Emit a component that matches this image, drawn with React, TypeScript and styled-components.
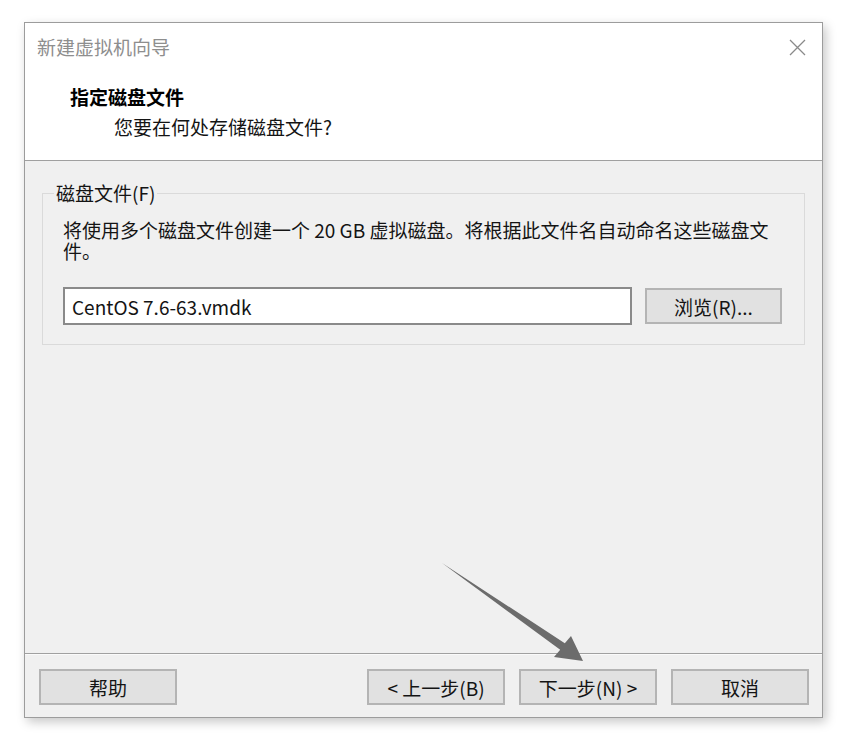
import React from 'react'
import styled, { createGlobalStyle } from 'styled-components'

const GlobalStyle = createGlobalStyle`
  html, body {
    margin: 0;
    padding: 0;
    background: #ffffff;
    font-family: "Noto Sans CJK SC", "Noto Sans", sans-serif;
    color: #141414;
  }
`

const Page = styled.div`
  position: relative;
  width: 852px;
  height: 744px;
  padding: 22px 0 0 24px;
  box-sizing: border-box;
`

const Dialog = styled.div`
  width: 799px;
  height: 696px;
  box-sizing: border-box;
  border: 1px solid #9c9c9c;
  background: #f0f0f0;
  display: flex;
  flex-direction: column;
  box-shadow: 3px 4px 10px rgba(0, 0, 0, 0.22);
`

const Header = styled.div`
  height: 138px;
  box-sizing: border-box;
  background: #ffffff;
  border-bottom: 1px solid #a0a0a0;
  padding: 13px 0 0 12px;
  display: flex;
  flex-direction: column;
`

const TitleBar = styled.div`
  display: flex;
  align-items: center;
  justify-content: space-between;
  height: 22px;
  padding-right: 16px;
`

const Title = styled.span`
  font-size: 19px;
  line-height: 22px;
  color: #8e8e8e;
`

const CloseButton = styled.span`
  display: flex;
  width: 17px;
  height: 17px;
`

const Heading = styled.div`
  margin: 28px 0 0 33px;
  font-size: 19px;
  line-height: 22px;
  font-weight: 700;
  color: #000;
`

const SubHeading = styled.div`
  margin: 8px 0 0 77px;
  font-size: 19px;
  line-height: 22px;
`

const Body = styled.div`
  flex: 1;
  padding: 21px 17px 0 17px;
`

const Group = styled.fieldset`
  margin: 0;
  padding: 0 0 19px 11px;
  border: 1px solid #dadada;
  min-width: 0;
`

const Legend = styled.legend`
  padding: 0 2px;
  font-size: 19px;
  line-height: 22px;
`

const GroupContent = styled.div`
  padding: 15px 22px 0 9px;
`

const Description = styled.p`
  margin: 0;
  font-size: 19px;
  line-height: 21px;
`

const FileRow = styled.div`
  display: flex;
  align-items: center;
  gap: 13px;
  margin-top: 26px;
`

const FileInput = styled.input`
  flex: 1;
  min-width: 0;
  height: 38px;
  box-sizing: border-box;
  border: 2px solid #8a8a8a;
  background: #ffffff;
  padding: 0 7px;
  font-family: inherit;
  font-size: 19px;
  color: #141414;
  outline: none;
`

const Button = styled.button<{ $width?: number }>`
  width: ${(p) => p.$width ?? 138}px;
  height: 36px;
  box-sizing: border-box;
  background: #e1e1e1;
  border: 2px solid #b4b4b4;
  border-radius: 0;
  padding: 0;
  font-family: inherit;
  font-size: 19px;
  line-height: 1;
  color: #141414;
`

const Footer = styled.div`
  height: 64px;
  box-sizing: border-box;
  border-top: 1px solid #a0a0a0;
  box-shadow: inset 0 1px 0 #fafafa;
  padding: 15px 13px 0 14px;
  display: flex;
  align-items: flex-start;
  gap: 14px;
`

const Spacer = styled.div`
  flex: 1;
`

const ArrowLayer = styled.svg`
  position: absolute;
  left: 0;
  top: 0;
  pointer-events: none;
`

export default function App() {
  return (
    <>
      <GlobalStyle />
      <Page>
        <Dialog>
          <Header>
            <TitleBar>
              <Title>新建虚拟机向导</Title>
              <CloseButton>
                <svg width="17" height="17" viewBox="0 0 17 17">
                  <path d="M1 1 L16 16 M16 1 L1 16" stroke="#8a8a8a" strokeWidth="1.3" fill="none" />
                </svg>
              </CloseButton>
            </TitleBar>
            <Heading>指定磁盘文件</Heading>
            <SubHeading>您要在何处存储磁盘文件?</SubHeading>
          </Header>
          <Body>
            <Group>
              <Legend>磁盘文件(F)</Legend>
              <GroupContent>
                <Description>
                  将使用多个磁盘文件创建一个 20 GB 虚拟磁盘。将根据此文件名自动命名这些磁盘文件。
                </Description>
                <FileRow>
                  <FileInput defaultValue="CentOS 7.6-63.vmdk" />
                  <Button $width={137}>浏览(R)...</Button>
                </FileRow>
              </GroupContent>
            </Group>
          </Body>
          <Footer>
            <Button>帮助</Button>
            <Spacer />
            <Button>&lt; 上一步(B)</Button>
            <Button>下一步(N) &gt;</Button>
            <Button>取消</Button>
          </Footer>
        </Dialog>
        <ArrowLayer width="852" height="744" viewBox="0 0 852 744">
          <polygon
            points="442,563 564.8,643.2 571,636 583,661 554,657 560.2,649.8"
            fill="#6c6c6c"
          />
        </ArrowLayer>
      </Page>
    </>
  )
}
